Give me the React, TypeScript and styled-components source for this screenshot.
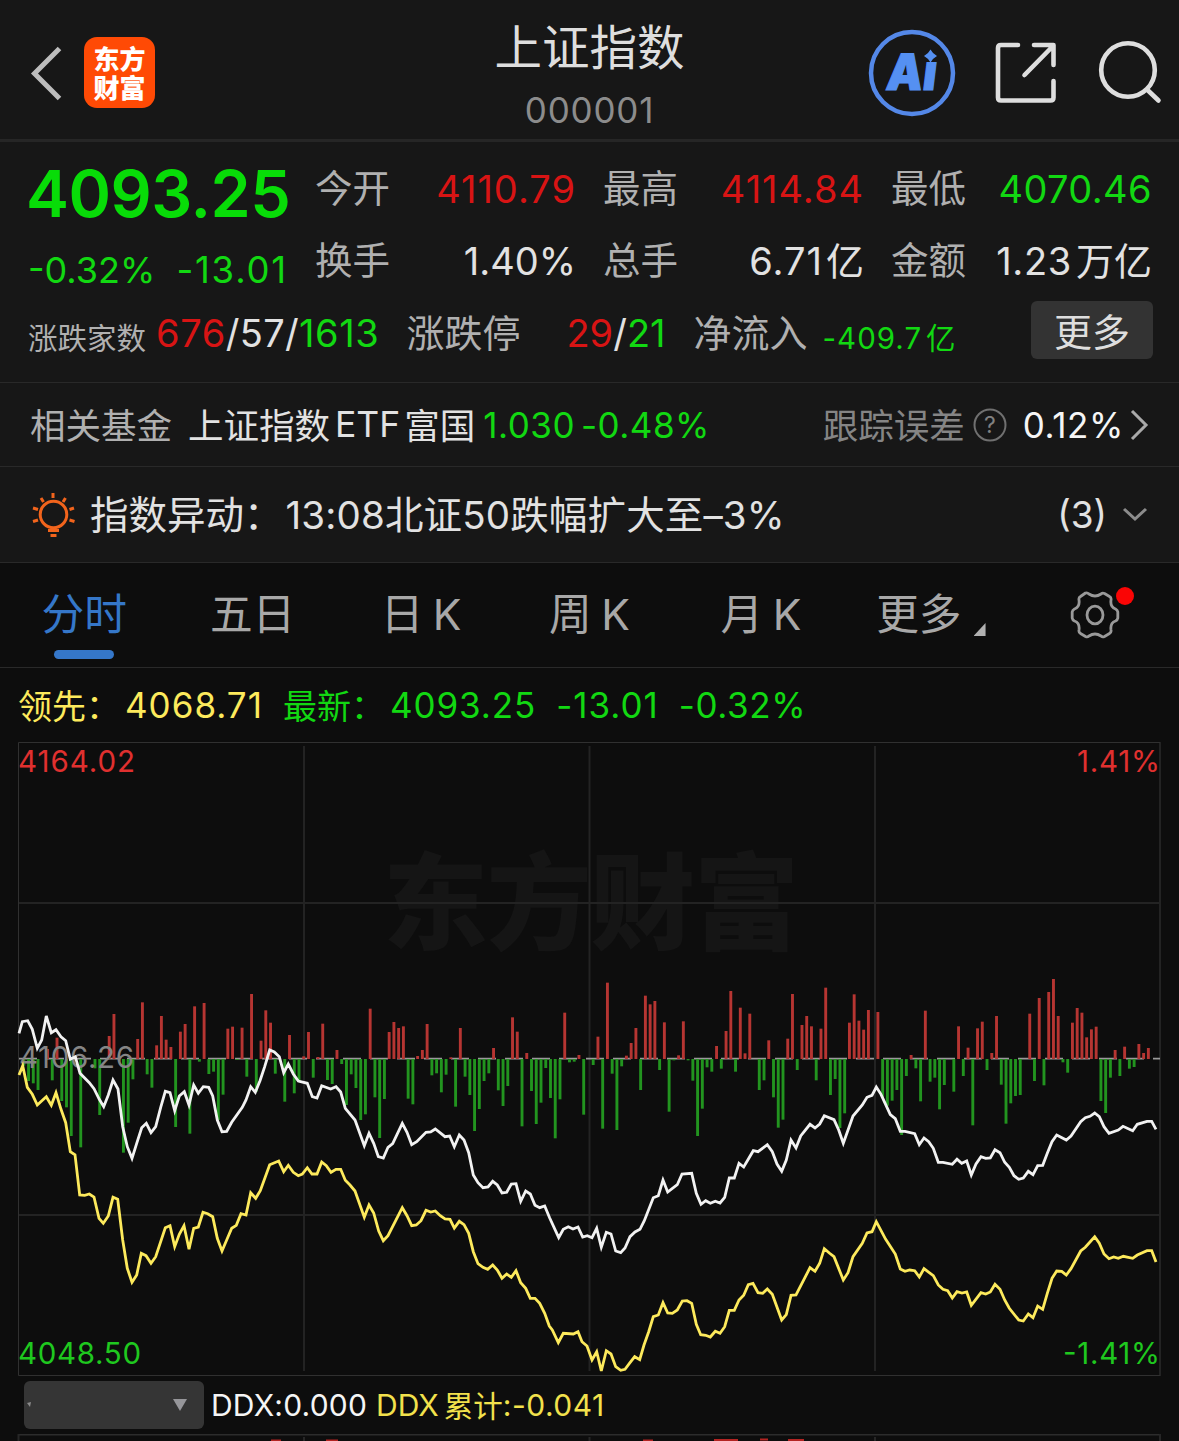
import React from "react";
import styled, { createGlobalStyle } from "styled-components";

const GREEN = "#12d812";
const RED = "#d81414";

const Global = createGlobalStyle`
  * { box-sizing: border-box; }
  body {
    margin: 0;
    background: #0d0d0d;
    color: #dedede;
    font-family: Inter, "Noto Sans CJK SC", sans-serif;
  }
`;

const Screen = styled.main`
  width: 1179px;
  height: 1441px;
  overflow: hidden;
  display: flex;
  flex-direction: column;
  background: #0d0d0d;
  white-space: nowrap;
`;

/* ---------- header ---------- */
const Header = styled.header`
  height: 142px;
  flex: none;
  display: grid;
  grid-template-columns: 400px 379px 400px;
  background: #171717;
  border-bottom: 3px solid #262626;
`;
const HeaderSide = styled.div<{ $end?: boolean }>`
  display: flex;
  align-items: center;
  justify-content: ${(p) => (p.$end ? "flex-end" : "flex-start")};
  padding: ${(p) => (p.$end ? "6px 16px 0 0" : "6px 0 0 30px")};
`;
const Brand = styled.div`
  width: 71px;
  height: 71px;
  margin-left: 21px;
  padding: 6px 9px 0 9.5px;
  border-radius: 13px;
  background: #ff4a05;
  color: #fff;
  font: 900 26px/29px "Noto Sans CJK SC", sans-serif;
  white-space: normal;
`;
const TitleBlock = styled.div`
  display: flex;
  flex-direction: column;
  align-items: center;
`;
const Title = styled.h1`
  margin: 13px 0 0;
  font-size: 47.5px;
  font-weight: 400;
  line-height: 70px;
  height: 70px;
`;
const Code = styled.div`
  font-size: 35px;
  line-height: 55px;
  letter-spacing: 0.8px;
  color: #8c8c8c;
`;

/* ---------- quote ---------- */
const Quote = styled.section`
  height: 241px;
  flex: none;
  padding: 11px 28px 0;
  background: #171717;
  border-bottom: 1px solid #292929;
`;
const QuoteGrid = styled.div`
  display: grid;
  grid-template-columns: 260px 261px 261px 261px;
  grid-template-rows: 72px 72px;
  column-gap: 27px;
`;
const Price = styled.div`
  margin-left: -2px;
  color: #08dc08;
  font-size: 64.5px;
  font-weight: 600;
  line-height: 82px;
  letter-spacing: -0.5px;
`;
const Changes = styled.div`
  display: flex;
  justify-content: space-between;
  color: ${GREEN};
  font-size: 36px;
  line-height: 91px;
`;
const Stat = styled.div`
  display: flex;
  align-items: baseline;
  line-height: 72px;
  & > :first-child {
    margin-right: auto;
    transform: translateY(-1px);
  }
`;
const Label = styled.span<{ $size?: number; $dim?: boolean; $lift?: number }>`
  font-size: ${(p) => p.$size ?? 37.5}px;
  color: ${(p) => (p.$dim ? "#858585" : "#b0b0b0")};
  padding-bottom: ${(p) => p.$lift ?? 0}px;
`;
const Value = styled.span<{ $color?: string; $size?: number; $track?: number; $gap?: number; $lift?: number }>`
  font-size: ${(p) => p.$size ?? 38}px;
  color: ${(p) => p.$color ?? "#e2e2e2"};
  letter-spacing: ${(p) => p.$track ?? 0}px;
  margin-left: ${(p) => p.$gap ?? 0}px;
  padding-bottom: ${(p) => p.$lift ?? 0}px;
`;
const Breadth = styled.div`
  display: flex;
  align-items: baseline;
  height: 72px;
  line-height: 72px;
`;
const SmallInk = styled.span`
  display: flex;
  align-items: baseline;
  transform: translateY(2px);
`;
const MoreButton = styled.button`
  align-self: flex-start;
  width: 122px;
  height: 58px;
  margin: 4px -2px 0 auto;
  padding: 0;
  border: 0;
  border-radius: 6px;
  background: #333;
  color: #dedede;
  font: 400 38px/54px "Noto Sans CJK SC", sans-serif;
`;

/* ---------- fund and alert rows ---------- */
const FundRow = styled.section`
  height: 84px;
  flex: none;
  display: flex;
  align-items: center;
  padding: 0 30px;
  background: #171717;
  border-bottom: 1px solid #292929;
`;
const Push = styled.span`
  margin-left: auto;
`;
const Help = styled.span`
  display: flex;
  margin-left: 8px;
`;
const Chevron = styled.svg`
  margin-left: 5px;
`;
const AlertRow = styled(FundRow)`
  height: 96px;
  padding-left: 32px;
`;

/* ---------- tabs ---------- */
const Tabs = styled.nav`
  height: 105px;
  flex: none;
  display: grid;
  grid-template-columns: repeat(7, 1fr);
  border-bottom: 1px solid #292929;
`;
const Tab = styled.div<{ $active?: boolean; $shift?: number }>`
  position: relative;
  display: flex;
  justify-content: center;
  padding-left: ${(p) => p.$shift ?? 0}px;
  font-size: 42.7px;
  line-height: 104px;
  word-spacing: -2.5px;
  color: ${(p) => (p.$active ? "#3577c9" : "#a8a8a8")};
  &::after {
    content: "";
    display: ${(p) => (p.$active ? "block" : "none")};
    position: absolute;
    bottom: 8px;
    width: 60px;
    height: 9px;
    border-radius: 5px;
    background: #3577c9;
  }
`;
const Corner = styled.i`
  align-self: flex-end;
  width: 12px;
  height: 13px;
  margin: 0 0 31px 12px;
  background: #b0b0b0;
  clip-path: polygon(100% 0, 100% 100%, 0 100%);
`;
const GearTab = styled(Tab)`
  align-items: center;
`;
const Dot = styled.i`
  position: absolute;
  top: 24px;
  right: 45px;
  width: 18px;
  height: 18px;
  border-radius: 50%;
  background: #fa0505;
`;

/* ---------- chart ---------- */
const Legend = styled.div`
  height: 74px;
  flex: none;
  display: flex;
  align-items: center;
  padding: 0 18px;
`;
const ChartArea = styled.div`
  height: 634px;
  flex: none;
  svg { display: block; }
`;
const DdxBar = styled.div`
  height: 58px;
  flex: none;
  display: flex;
  align-items: center;
  padding: 0 24px;
`;
const Picker = styled.div`
  width: 180px;
  height: 48px;
  display: flex;
  align-items: center;
  justify-content: space-between;
  padding: 0 17px 0 2px;
  border-radius: 6px;
  background: #353535;
`;
const NextPane = styled.div`
  height: 7px;
  flex: none;
  svg { display: block; }
`;

/* Minute bars: [minute, signed strength]. */
const BARS: [number, number][] = [
  [1,-20],[2,-66],[3,-73],[4,-93],[6,30],[7,-64],[8,64],[9,-126],[10,-145],[11,-231],[13,-265],[16,-28],[17,-168],
  [19,69],[20,135],[22,-281],[23,-191],[24,-61],[25,60],[26,170],[27,-46],[28,-86],[29,41],[30,129],[31,58],[32,36],
  [33,-204],[34,82],[35,105],[36,-224],[37,158],[38,-8],[39,168],[40,-45],[41,-38],[42,-183],[43,-107],[44,91],[45,97],
  [46,-3],[47,94],[48,-53],[49,195],[50,-98],[51,55],[52,146],[53,109],[54,-44],[56,-128],[57,72],[58,-103],[59,-68],
  [60,8],[61,81],[62,-56],[63,6],[64,106],[65,-63],[66,-75],[67,27],[68,-15],[69,-138],[70,-46],[71,-87],[72,-183],
  [73,-166],[74,151],[75,-115],[76,-237],[77,-120],[78,81],[79,111],[80,93],[81,98],[82,-119],[83,-136],[84,9],[85,27],
  [86,105],[87,-49],[88,-43],[89,-100],[90,-47],[91,5],[92,-143],[93,93],[94,-53],[95,-108],[96,-216],[97,-150],[98,-66],
  [99,-43],[100,33],[101,-94],[102,-141],[103,-81],[104,125],[105,82],[106,-202],[107,18],[108,-96],[109,-195],[110,-131],
  [111,-27],[112,-117],[113,-238],[114,-121],[115,139],[116,-10],[117,-8],[118,12],[119,-167],[121,-18],[122,67],
  [123,-209],[124,229],[125,-44],[126,-213],[127,-22],[128,10],[129,48],[130,93],[131,-93],[132,190],[133,164],[134,174],
  [135,-33],[136,110],[137,-158],[138,-4],[139,11],[140,113],[141,-4],[142,-65],[143,-231],[144,-149],[145,-25],[146,-38],
  [147,39],[148,-29],[149,84],[150,204],[151,-38],[152,154],[153,17],[154,136],[156,-93],[157,-64],[158,56],[159,-115],
  [160,-206],[161,-182],[162,61],[163,195],[164,-33],[165,102],[166,129],[167,98],[168,-64],[169,91],[170,214],[171,-108],
  [172,-60],[173,-207],[174,-163],[175,109],[176,194],[177,115],[178,88],[179,147],[181,141],[182,-115],[183,-140],
  [184,-125],[185,-93],[186,-228],[187,-51],[188,12],[189,-28],[190,-127],[191,145],[192,-68],[193,-56],[194,-151],
  [195,-78],[197,-98],[198,98],[199,-51],[200,34],[201,-199],[202,92],[203,112],[204,-33],[205,18],[206,129],[207,-77],
  [208,-194],[209,-133],[210,-111],[211,-108],[213,136],[214,-66],[215,183],[216,-79],[217,201],[218,240],[219,129],
  [220,-10],[221,-41],[222,109],[223,153],[224,139],[225,65],[226,89],[227,97],[228,-126],[229,-162],[230,-56],[231,27],
  [232,-51],[233,37],[234,-29],[235,-24],[236,45],[237,18],[238,33],
];

/* Each line is stored per trading hour: left edge, then x,y pairs in thirds of a pixel. */
type Hour = { left: number; pts: string };

const INDEX_LINE: Hour[] = [
  { left: 10, pts: "27,190 37,155 53,152 67,178 82,235 95,210 109,138 124,188 138,179 153,200 167,212 181,268 196,260 210,310 238,338 252,356 268,388 281,410 295,375 309,330 324,357 338,470 352,530 366,565 380,520 395,473 409,460 423,488 437,470 452,412 466,364 480,368 494,422 508,378 523,365 537,405 551,345 565,370 580,350 596,352 608,378 622,450 636,485 650,484 665,457 697,412 708,390 722,350 736,367 750,332 764,290 779,240 793,246 808,260 821,308 835,282 850,312 865,333" },
  { left: 300, pts: "22,340 37,380 51,384 65,347 92,357 108,350 122,366 136,415 165,450 193,527 207,490 221,520 235,560 250,564 264,532 278,521 307,460 321,487 335,524 350,515 378,487 392,486 406,477 435,500 449,498 463,530 478,495 492,510 506,548 520,615 534,638 549,653 564,651 578,634 592,645 606,669 620,667 634,642 648,641 662,694 677,663 691,672 705,706 719,713 734,708 749,744 776,803 790,778 805,770 819,777 834,771 848,801 862,797 876,803" },
  { left: 590, pts: "20,775 34,832 49,787 63,792 77,843 92,848 105,834 120,800 135,786 150,778 163,752 190,683 205,677 219,630 233,666 262,644 276,612 305,610 319,670 333,703 347,692 361,700 376,694 390,699 404,682 418,624 433,624 447,580 461,591 490,542 504,545 532,524 547,545 561,582 575,604 589,570 603,510 618,534 632,498 660,463 675,474 689,462 703,437 732,449 746,480 760,520 775,478 789,438 817,405 831,382 846,376 859,351" },
  { left: 870, pts: "33,373 61,434 76,446 91,484 105,484 134,491 148,524 162,504 176,515 190,535 205,577 219,577 247,583 261,568 275,580 290,573 304,615 318,582 333,560 347,565 361,564 375,539 390,548 404,577 418,592 432,617 446,628 460,624 475,604 489,614 503,587 518,586 532,550 546,515 560,495 589,510 603,498 632,455 646,443 660,439 674,429 688,440 702,470 717,490 745,480 759,469 788,482 802,463 831,454 845,454 858,478" },
];

const LEAD_LINE: Hour[] = [
  { left: 10, pts: "27,315 38,287 52,352 67,373 82,405 109,380 124,406 138,368 153,418 167,458 181,545 195,554 209,675 224,676 238,672 252,681 267,745 280,760 295,738 309,682 323,688 338,810 352,895 366,937 380,915 394,850 408,857 423,880 437,860 466,773 480,767 494,830 508,793 522,767 537,838 551,775 565,771 579,727 593,731 608,740 622,805 636,843 651,808 665,775 679,766 693,731 708,735 722,668 737,685 751,662 779,584 806,573 821,605 835,586 850,607 865,617" },
  { left: 300, pts: "7,612 22,593 36,612 51,612 65,576 79,587 93,607 108,598 122,598 136,631 150,645 165,663 193,742 207,705 221,729 236,783 250,812 264,797 307,713 321,737 335,767 349,765 363,752 378,721 392,726 406,723 421,737 435,747 450,748 463,774 478,754 492,764 506,790 520,845 534,881 549,892 563,898 578,885 592,900 606,925 620,912 634,922 648,902 662,938 677,955 691,985 705,985 719,1000 734,1030 748,1068 757,1080 775,1118 790,1090 820,1092 834,1085 846,1115 861,1128 876,1170" },
  { left: 590, pts: "20,1145 34,1203 49,1142 63,1152 77,1190 92,1201 105,1198 120,1178 134,1160 149,1169 162,1125 176,1085 190,1040 205,1035 219,998 233,1029 247,1030 262,1020 277,993 291,992 305,1000 319,1063 332,1094 347,1096 361,1101 376,1084 390,1090 404,1070 418,1021 433,1021 447,990 461,976 475,944 489,940 504,968 518,970 532,957 547,973 575,1050 589,1034 603,976 618,975 660,893 675,904 689,880 703,836 718,849 732,860 760,930 774,908 789,860 817,820 831,789 846,785 859,755" },
  { left: 870, pts: "47,808 76,852 91,897 105,904 119,900 134,902 148,921 162,896 190,917 205,945 219,958 233,962 247,984 261,965 276,969 290,966 304,1006 333,968 347,972 361,966 375,943 390,958 404,990 418,1015 446,1050 460,1053 475,1032 489,1043 503,1008 518,1018 532,970 546,925 560,903 575,904 589,915 603,896 632,843 646,832 674,800 688,820 702,852 717,866 731,861 745,865 760,859 788,865 802,855 831,842 845,842 858,876" },
];

const toPoints = (hours: Hour[]) =>
  hours
    .flatMap((h) =>
      h.pts.split(" ").map((pair) => {
        const [x, y] = pair.split(",").map(Number);
        return `${(h.left + x / 3).toFixed(1)},${(970 + y / 3).toFixed(1)}`;
      })
    )
    .join(" ");

const BASE = 1059;

function Chart() {
  return (
    <svg width="1179" height="634" viewBox="0 742 1179 634" fontFamily="Inter, sans-serif" fontSize="29.5">
      <text x="383" y="941" fontSize="105" fontWeight="900" fill="#151515" textLength="416" fontFamily="Noto Sans CJK SC">东方财富</text>
      <g stroke="#232323" strokeWidth="2" fill="none">
        <path d="M304 746V1371M589.5 746V1371M875 746V1371" />
        <path d="M19 903H1160M19 1215H1160" />
        <path d="M1160 742V1376" />
        <path d="M18.5 1375.5V742.5H1160M18.5 1375.5H1160" strokeWidth="1" stroke="#303030" />
      </g>
      <path d="M19 1058.7H1160" stroke="#9a9a9a" strokeWidth="1.8" strokeDasharray="18 9" />
      {BARS.map(([i, v]) => (
        <rect
          key={i}
          x={17.6 + i * 4.745}
          width="2.9"
          y={v > 0 ? BASE - v / 3 : BASE}
          height={Math.abs(v) / 3}
          fill={v > 0 ? "#b63532" : "#22941f"}
        />
      ))}
      <text x="19" y="1067.5" fill="#858585" textLength="115">4106.26</text>
      <polyline points={toPoints(LEAD_LINE)} fill="none" stroke="#fdea5c" strokeWidth="2.8" />
      <polyline points={toPoints(INDEX_LINE)} fill="none" stroke="#f2f2f2" strokeWidth="2.8" />
      <text x="18" y="772" fill="#e0302f" textLength="117">4164.02</text>
      <text x="1077" y="772" fill="#e0302f" textLength="83">1.41%</text>
      <text x="18" y="1364" fill="#1fc81f" textLength="123">4048.50</text>
      <text x="1063" y="1364" fill="#1fc81f" textLength="97">-1.41%</text>
    </svg>
  );
}

const BackIcon = () => (
  <svg width="33" height="56" viewBox="0 0 33 56" fill="none" stroke="#bdbdbd" strokeWidth="5">
    <path d="M29.5 3.5 4.5 28.5 29.5 53.5" />
  </svg>
);

const HeaderIcons = () => (
  <svg width="296" height="90" viewBox="867 28 296 90" fill="none">
    <circle cx="912" cy="73" r="41" stroke="#5488e8" strokeWidth="4.5" />
    <g fill="#5590f2" fontFamily="Inter, sans-serif" fontWeight="900">
      <text transform="translate(885 89.5) skewX(-7)" fontSize="50" textLength="50" lengthAdjust="spacingAndGlyphs" stroke="#5590f2" strokeWidth="1.2">Aı</text>
      <path d="M930.5 49.5Q932.5 53.500 937 56Q932.500 58.500 930.500 62.500Q928.500 58.500 924 56Q928.500 53.500 930.500 49.500Z" />
    </g>
    <g stroke="#dedede" strokeWidth="4.6" strokeLinecap="round" strokeLinejoin="round">
      <path d="M1018 45H1001Q998 45 998 48V97.5Q998 100.5 1001 100.5H1050.5Q1053.5 100.5 1053.5 97.5V81" />
      <path d="M1034 45H1053.5V65M1053 46 1024.5 75" />
      <circle cx="1128" cy="70" r="26.8" />
      <path d="M1147.5 90 1158.5 100.5" />
    </g>
  </svg>
);

const BulbIcon = () => (
  <svg width="44" height="46" viewBox="32 491 44 46" fill="none" stroke="#f2641c" strokeWidth="3">
    <circle cx="53.5" cy="513.5" r="13.3" />
    <path d="M48 529.5H59M50.5 534.5H56.5M53 492V497M41 497 43.5 501M65.5 497 63 501M33 507 38 508.5M74 507 69.5 508.5M33 520.5 38 519M74.5 520.5 69.5 519" />
  </svg>
);

const HelpIcon = () => (
  <svg width="34" height="34" viewBox="0 0 34 34">
    <circle cx="17" cy="17" r="15.5" fill="none" stroke="#707070" strokeWidth="2" />
    <text x="17" y="25" fontSize="23" fill="#808080" textAnchor="middle">?</text>
  </svg>
);

const GearIcon = () => (
  <svg width="50" height="48" viewBox="-25 -24 50 48" fill="none" stroke="#999" strokeWidth="2.8" strokeLinejoin="round">
    <path d="M-9.5 -22Q-7.500 -22.500 -6 -21Q0 -17 6 -21Q7.500 -22.500 9.500 -21.500L14.500 -18.500Q16.500 -17.500 16 -15Q15 -8 20.500 -6Q22.500 -5 22.800 -3V3Q22.500 5 20.500 6Q15 8 16 15Q16.500 17.500 14.500 18.500L9.500 21.500Q7.500 22.500 6 21Q0 17 -6 21Q-7.500 22.500 -9.500 21.500L-14.500 18.500Q-16.500 17.500 -16 15Q-15 8 -20.500 6Q-22.500 5 -22.800 3V-3Q-22.500 -5 -20.500 -6Q-15 -8 -16 -15Q-16.500 -17.500 -14.500 -18.500Z" />
    <ellipse rx="8" ry="8.800" />
  </svg>
);

export default function App() {
  return (
    <Screen>
      <Global />
      <Header>
        <HeaderSide>
          <BackIcon />
          <Brand>东方财富</Brand>
        </HeaderSide>
        <TitleBlock>
          <Title>上证指数</Title>
          <Code>000001</Code>
        </TitleBlock>
        <HeaderSide $end><HeaderIcons /></HeaderSide>
      </Header>

      <Quote>
        <QuoteGrid>
          <Price>4093.25</Price>
          <Stat><Label>今开</Label><Value $color={RED} $track={1}>4110.79</Value></Stat>
          <Stat><Label>最高</Label><Value $color={RED} $track={1}>4114.84</Value></Stat>
          <Stat><Label>最低</Label><Value $color={GREEN} $track={0.4}>4070.46</Value></Stat>
          <Changes><span>-0.32%</span><Value $color={GREEN} $size={36.5} $track={1.8}>-13.01</Value></Changes>
          <Stat><Label>换手</Label><Value>1.40%</Value></Stat>
          <Stat><Label>总手</Label><Value $track={1}>6.71</Value><Value $gap={3}>亿</Value></Stat>
          <Stat><Label>金额</Label><Value $track={0.7}>1.23</Value><Value $gap={4}>万亿</Value></Stat>
        </QuoteGrid>
        <Breadth>
          <SmallInk><Label $size={29.5}>涨跌家数</Label></SmallInk>
          <Value $color={RED} $gap={10} $track={0.6}>676</Value>
          <Value $track={0.3}>/57/</Value>
          <Value $color={GREEN} $track={0.6}>1613</Value>
          <Value $color="#b0b0b0" $gap={27}>涨跌停</Value>
          <Value $color={RED} $gap={46}>29</Value>
          <Value>/</Value>
          <Value $color={GREEN}>21</Value>
          <Value $color="#b0b0b0" $gap={28}>净流入</Value>
          <SmallInk>
            <Value $color={GREEN} $size={29.5} $gap={15} $track={1}>-409.7</Value>
            <Value $color={GREEN} $size={29.5} $gap={4}>亿</Value>
          </SmallInk>
          <MoreButton>更多</MoreButton>
        </Breadth>
      </Quote>

      <FundRow>
        <Label $size={35.5} $lift={3}>相关基金</Label>
        <Value $size={35.5} $gap={16} $lift={3}>上证指数</Value>
        <Value $size={35.5} $gap={5}>ETF</Value>
        <Value $size={35.5} $gap={4} $lift={3}>富国</Value>
        <Value $color={GREEN} $size={35} $gap={8} $track={0.5}>1.030</Value>
        <Value $color={GREEN} $size={35} $gap={6} $track={0.5}>-0.48%</Value>
        <Push />
        <Label $size={35.5} $lift={3} $dim>跟踪误差</Label>
        <Help><HelpIcon /></Help>
        <Value $color="#f5f5f5" $size={35} $gap={16} $track={0.6}>0.12%</Value>
        <Chevron width="20" height="32" viewBox="0 0 20 32" fill="none" stroke="#aaa" strokeWidth="3"><path d="M3 2 17 16 3 30" /></Chevron>
      </FundRow>

      <AlertRow>
        <BulbIcon />
        <Value $size={38.5} $gap={14} $lift={6}>指数异动：</Value>
        <Value $size={38.5} $gap={3} $track={0.15} $lift={6}>13:08北证50跌幅扩大至–3%</Value>
        <Push />
        <Value $size={37}>(3)</Value>
        <svg width="42" height="16" viewBox="2 0 42 16" fill="none" stroke="#8c8c8c" strokeWidth="3"><path d="M19 2 30 12 41 2" /></svg>
      </AlertRow>

      <Tabs>
        <Tab $active>分时</Tab>
        <Tab>五日</Tab>
        <Tab>日 K</Tab>
        <Tab>周 K</Tab>
        <Tab $shift={6}>月 K</Tab>
        <Tab $shift={9}>更多<Corner /></Tab>
        <GearTab><GearIcon /><Dot /></GearTab>
      </Tabs>

      <Legend>
        <Value $color="#fdea5c" $size={34} $lift={2}>领先：</Value>
        <Value $color="#fdea5c" $size={35} $track={1} $gap={5}>4068.71</Value>
        <Value $color={GREEN} $size={34} $gap={20} $lift={2}>最新：</Value>
        <Value $color={GREEN} $size={35} $track={0.9} $gap={5}>4093.25</Value>
        <Value $color={GREEN} $size={35} $track={1} $gap={20}>-13.01</Value>
        <Value $color={GREEN} $size={35} $track={0.6} $gap={20}>-0.32%</Value>
      </Legend>
      <ChartArea><Chart /></ChartArea>

      <DdxBar>
        <Picker>
          <svg width="8" height="12" viewBox="0 0 8 12"><path d="M1 4 5 3 4 8Z" fill="#8a8a8a" /></svg>
          <svg width="14" height="12" viewBox="0 0 14 12"><path d="M0 0H14L7 12Z" fill="#96969a" /></svg>
        </Picker>
        <Value $color="#f5f5f5" $size={30} $gap={7} $track={0.2}>DDX:0.000</Value>
        <Value $color="#f2e14c" $size={30} $gap={9}>DDX</Value>
        <Value $color="#f2e14c" $size={29.5} $gap={5} $lift={2}>累计</Value>
        <Value $color="#f2e14c" $size={30} $track={0.5}>:-0.041</Value>
      </DdxBar>
      <NextPane>
        <svg width="1179" height="7" viewBox="0 1434 1179 7">
          <path d="M18 1434.5H1161" stroke="#2c2c2c" strokeWidth="2" />
          <path d="M18.5 1434V1441M304 1437V1441M589.5 1437V1441M875 1437V1441M1160 1434V1441" stroke="#262626" strokeWidth="2" />
          <path d="M271 1440.5H281M326 1440.5H338M643 1440.5H653M714 1440H738M760 1439.5H768M788 1440H804" stroke="#b32422" strokeWidth="2" />
        </svg>
      </NextPane>
    </Screen>
  );
}
